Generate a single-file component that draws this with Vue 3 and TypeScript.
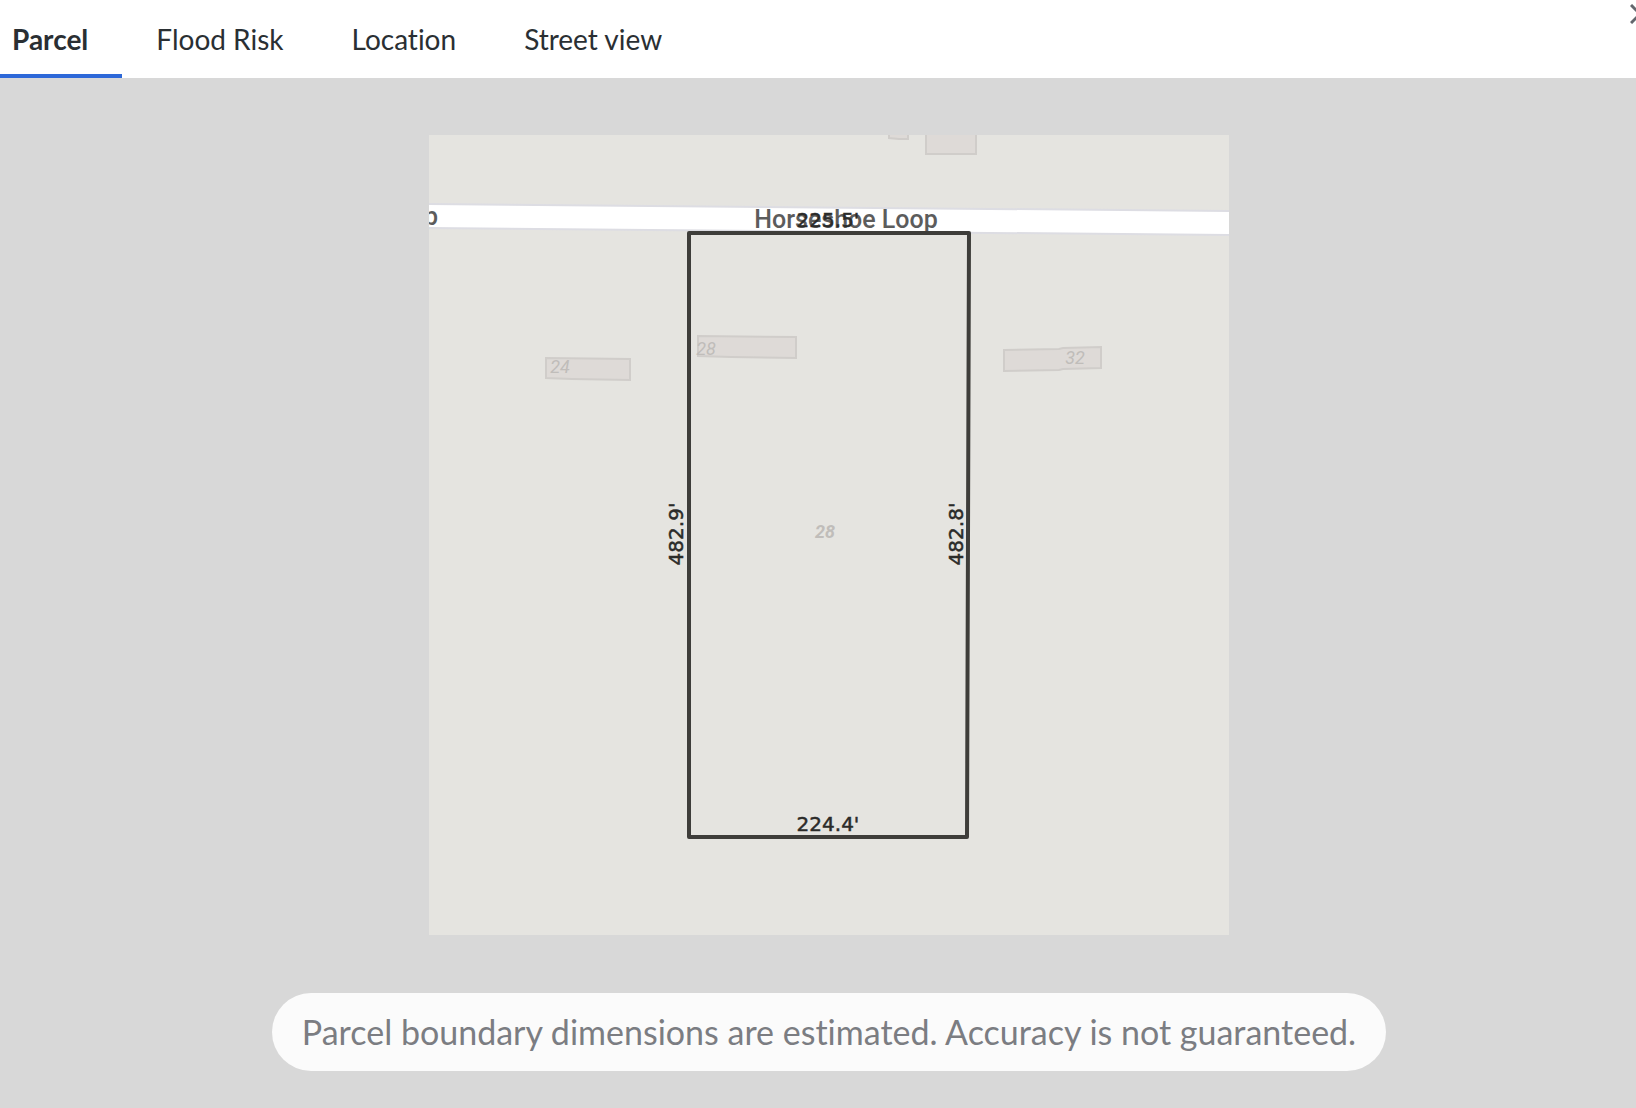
<script setup lang="ts">
import { ref } from 'vue'

interface Tab {
  id: string
  label: string
}

interface HouseNumber {
  label: string
  x: number
  y: number
  strong?: boolean
}

const tabs: Tab[] = [
  { id: 'parcel', label: 'Parcel' },
  { id: 'flood', label: 'Flood Risk' },
  { id: 'location', label: 'Location' },
  { id: 'street', label: 'Street view' },
]
const active = ref('parcel')

const buildings: string[] = [
  '460,-4 479,-4 479,4 470,4 460,3',
  '497,-4 547,-4 547,19 497,19',
  '117,223 201,224 201,245 143,244 117,243',
  '269,201 367,202 367,223 302,222 269,221',
  '575,215 630,214 634,213 672,212 672,233 634,234 630,235 575,236',
]

const houseNumbers: HouseNumber[] = [
  { label: '24', x: 131, y: 238 },
  { label: '28', x: 277, y: 220 },
  { label: '32', x: 646, y: 229 },
  { label: '28', x: 396, y: 403, strong: true },
]
</script>

<template>
  <div class="page">
    <div class="viewer">
      <header class="header">
        <nav class="tabs" role="tablist" aria-label="Parcel views">
          <button
            v-for="tab in tabs"
            :key="tab.id"
            type="button"
            role="tab"
            class="tab"
            :class="{ active: tab.id === active }"
            :aria-selected="tab.id === active"
            @click="active = tab.id"
          >
            {{ tab.label }}
          </button>
        </nav>
        <button type="button" class="close" aria-label="Close">
          <svg viewBox="0 0 20 20" width="20" height="20" aria-hidden="true">
            <path d="M1 1L19 19M19 1L1 19" />
          </svg>
        </button>
      </header>

      <main class="stage">
        <svg class="map" viewBox="0 0 800 800" role="img" aria-label="Parcel boundary map">
          <rect class="land" width="800" height="800" />
          <polygon v-for="shape in buildings" :key="shape" class="building" :points="shape" />
          <polygon class="road" points="-4,69 804,76 804,100 -4,93" />
          <text
            v-for="(n, i) in houseNumbers"
            :key="i"
            class="house-number"
            :class="{ strong: n.strong }"
            :x="n.x"
            :y="n.y"
          >{{ n.label }}</text>
          <text class="street" x="9" y="90" text-anchor="end">Horseshoe Loop</text>
          <text class="street" x="417" y="93" text-anchor="middle">Horseshoe Loop</text>
          <polygon class="parcel" points="260,98 540,98 538,702 260,702" />
          <text class="dimension" x="399" y="92">225.5'</text>
          <text class="dimension" x="399" y="696">224.4'</text>
          <text class="dimension" transform="translate(254 399) rotate(-90)">482.9'</text>
          <text class="dimension" transform="translate(534 399) rotate(-90)">482.8'</text>
        </svg>
        <p class="notice">Parcel boundary dimensions are estimated. Accuracy is not guaranteed.</p>
      </main>
    </div>
  </div>
</template>

<style>
body {
  margin: 0;
  background: #d8d8d8;
}
</style>

<style scoped>
.page {
  overflow: hidden;
  min-height: 100vh;
  font-family: Lato, 'Liberation Sans', sans-serif;
  font-variant-ligatures: none;
}

/* The viewer runs slightly past the right edge of the window. */
.viewer {
  display: flex;
  flex-direction: column;
  width: calc(100% + 22px);
  min-height: 100vh;
}

.header {
  display: flex;
  justify-content: space-between;
  align-items: flex-start;
  height: 78px;
  background: #fff;
}

.tabs {
  display: flex;
  height: 100%;
  margin-left: -22px;
}

.tab {
  box-sizing: border-box;
  height: 100%;
  padding: 4px 34px 0;
  border: 0;
  border-bottom: 4px solid transparent;
  background: none;
  color: #2a2f33;
  font-family: inherit;
  font-size: 28px;
  font-weight: 400;
  font-variant-ligatures: none;
  line-height: 32px;
  white-space: nowrap;
  cursor: pointer;
}

.tab.active {
  border-bottom-color: #2d68d8;
  font-weight: 700;
}

.close {
  display: flex;
  padding: 4px 8px;
  border: 0;
  background: none;
  cursor: pointer;
}

.close path {
  fill: none;
  stroke: #63666d;
  stroke-width: 3;
}

.stage {
  display: flex;
  flex: 1;
  flex-direction: column;
  align-items: center;
  gap: 58px;
  padding: 57px 32px 36px;
  background: #d8d8d8;
}

.map {
  display: block;
  width: 100%;
  max-width: 800px;
}

.land {
  fill: #e5e4e0;
}

.building {
  fill: #dedad7;
  stroke: #d0cdca;
  stroke-width: 2;
}

.road {
  fill: #fff;
  stroke: #dddde3;
  stroke-width: 2;
}

.parcel {
  fill: none;
  stroke: #3e3d3a;
  stroke-width: 4;
  stroke-linejoin: round;
}

.street {
  fill: #5c5c5c;
  font: 500 25px Roboto, sans-serif;
}

.dimension {
  fill: #2b2b29;
  stroke: #2b2b29;
  stroke-width: 0.5;
  font: 400 20px 'DejaVu Sans', sans-serif;
  text-anchor: middle;
}

.house-number {
  fill: #c0bdba;
  font: italic 400 18px Roboto, sans-serif;
  text-anchor: middle;
}

.house-number.strong {
  font-weight: 700;
}

.notice {
  box-sizing: border-box;
  margin: 0;
  padding: 19px 30px;
  border-radius: 40px;
  background: #fbfbfb;
  color: #7b7d82;
  font-size: 34px;
  line-height: 40px;
}
</style>
